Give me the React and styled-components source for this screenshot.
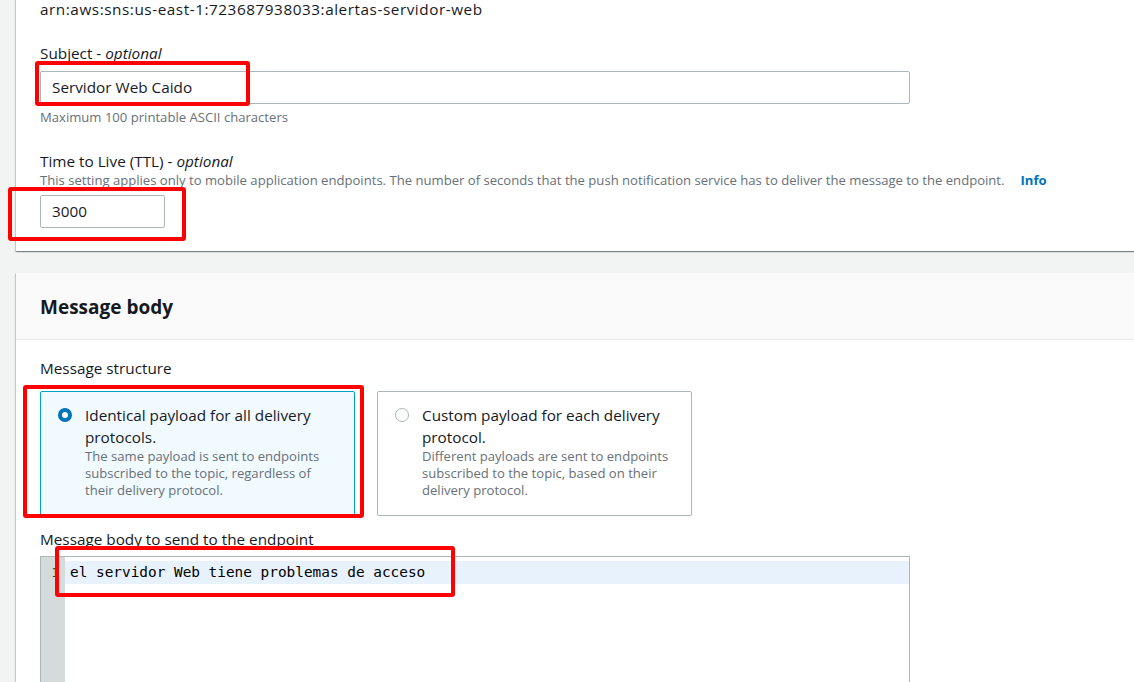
import React from "react";
import styled, { createGlobalStyle } from "styled-components";

const Global = createGlobalStyle`
  html, body { margin: 0; padding: 0; }
  body {
    background: #f2f3f3;
    font-family: "Open Sans", "Noto Sans", sans-serif;
    color: #16191f;
    overflow: hidden;
  }
`;

const Page = styled.div`
  width: 100vw;
  height: 682px;
  overflow: hidden;
  padding-left: 16px;
  box-sizing: border-box;
`;

const Card = styled.section`
  background: #fff;
  margin-right: -40px;
  margin-top: ${(p) => p.$top || 0}px;
  box-shadow: 0 1px 1px 0 rgba(0, 28, 36, 0.3), 1px 1px 1px 0 rgba(0, 28, 36, 0.15),
    -1px 1px 1px 0 rgba(0, 28, 36, 0.15);
`;

const CardBody = styled.div`
  padding: ${(p) => p.$pad || "0 24px 23px"};
  display: flex;
  flex-direction: column;
`;

const CardHeader = styled.header`
  background: #fafafa;
  border-bottom: 1px solid #eaeded;
  padding: 20px 24px 18px;
`;

const Title = styled.h2`
  margin: 0;
  font-size: 19px;
  line-height: 28px;
  font-weight: 700;
  color: #16191f;
`;

const Arn = styled.div`
  font-size: 15.3px;
  line-height: 18px;
  letter-spacing: 0.55px;
`;

const Label = styled.label`
  display: block;
  font-size: 15.3px;
  line-height: 22px;
  margin-top: ${(p) => p.$mt || 0}px;
  margin-bottom: ${(p) => p.$mb || 0}px;
  em { font-style: italic; }
`;

const Desc = styled.div`
  font-size: 13.1px;
  line-height: 16px;
  color: #687078;
  margin-top: ${(p) => p.$mt || 0}px;
  margin-bottom: ${(p) => p.$mb || 0}px;
`;

const InfoLink = styled.a`
  color: #0073bb;
  font-weight: 700;
  margin-left: 16px;
  text-decoration: none;
`;

const Field = styled.div`
  position: relative;
  width: ${(p) => p.$w}px;
`;

const Input = styled.div`
  box-sizing: border-box;
  height: 33px;
  width: 100%;
  border: 1px solid #aab7b8;
  border-radius: 2px;
  padding: 0 11px 1px;
  display: flex;
  align-items: center;
  font-size: 15.3px;
  color: #16191f;
  background: #fff;
`;

const Mark = styled.div`
  position: absolute;
  left: ${(p) => p.$l}px;
  top: ${(p) => p.$t}px;
  width: ${(p) => p.$w}px;
  height: ${(p) => p.$h}px;
  box-sizing: border-box;
  border: 4px solid #ff0000;
  border-radius: 3px;
  pointer-events: none;
`;

const Tiles = styled.div`
  display: flex;
  gap: 22px;
  margin-top: 12px;
`;

const TileWrap = styled.div`
  position: relative;
`;

const Tile = styled.div`
  box-sizing: border-box;
  width: ${(p) => p.$w}px;
  height: 125px;
  border: 1px solid ${(p) => (p.$on ? "#00a1c9" : "#aab7b8")};
  background: ${(p) => (p.$on ? "#f1faff" : "#fff")};
  border-radius: 2px;
  padding: 12px 17px 0 17px;
  display: flex;
  gap: 13px;
`;

const Radio = styled.span`
  flex: none;
  box-sizing: border-box;
  width: 14px;
  height: 14px;
  margin-top: 4px;
  border-radius: 50%;
  background: #fff;
  border: ${(p) => (p.$on ? "4px solid #0073bb" : "1.5px solid #aab7b8")};
`;

const TileText = styled.div`
  display: flex;
  flex-direction: column;
`;

const TileTitle = styled.div`
  font-size: 15.3px;
  line-height: 22px;
  color: #16191f;
`;

const TileDesc = styled.div`
  font-size: 13.1px;
  line-height: 17px;
  color: #687078;
`;

const EditorWrap = styled.div`
  position: relative;
  width: 870px;
`;

const Editor = styled.div`
  box-sizing: border-box;
  height: 200px;
  border: 1px solid #aab7b8;
  display: flex;
  background: #fff;
`;

const Gutter = styled.div`
  width: 24px;
  flex: none;
  background: #d5dbdb;
  padding-top: 4px;
  box-sizing: border-box;
`;

const LineNo = styled.div`
  height: 23px;
  line-height: 23px;
  text-align: right;
  padding-right: 6px;
  font-family: "DejaVu Sans Mono", monospace;
  font-size: 13px;
  color: #333;
`;

const Code = styled.div`
  flex: 1;
  padding-top: 4px;
`;

const CodeLine = styled.div`
  height: 23px;
  line-height: 23px;
  padding-left: 5px;
  background: ${(p) => (p.$active ? "#e8f2fd" : "transparent")};
  font-family: "DejaVu Sans Mono", monospace;
  font-size: 14.4px;
  color: #000;
  white-space: pre;
`;

export default function App() {
  return (
    <Page>
      <Global />
      <Card $top={-10}>
        <CardBody $pad="10px 24px 23px">
          <Arn>arn:aws:sns:us-east-1:723687938033:alertas-servidor-web</Arn>
          <Label $mt={24} $mb={7}>
            Subject - <em>optional</em>
          </Label>
          <Field $w={870}>
            <Input>Servidor Web Caido</Input>
            <Mark $l={-5} $t={-10} $w={215} $h={45} />
          </Field>
          <Desc $mt={5}>Maximum 100 printable ASCII characters</Desc>
          <Label $mt={25}>
            Time to Live (TTL) - <em>optional</em>
          </Label>
          <Desc $mb={7}>
            This setting applies only to mobile application endpoints. The number of seconds that the push
            notification service has to deliver the message to the endpoint.
            <InfoLink>Info</InfoLink>
          </Desc>
          <Field $w={125}>
            <Input>3000</Input>
            <Mark $l={-32} $t={-8} $w={178} $h={54} />
          </Field>
        </CardBody>
      </Card>

      <Card $top={22}>
        <CardHeader>
          <Title>Message body</Title>
        </CardHeader>
        <CardBody $pad="17px 24px 0">
          <Label>Message structure</Label>
          <Tiles>
            <TileWrap>
              <Tile $on $w={315}>
                <Radio $on />
                <TileText>
                  <TileTitle>Identical payload for all delivery protocols.</TileTitle>
                  <TileDesc>
                    The same payload is sent to endpoints subscribed to the topic, regardless of their delivery
                    protocol.
                  </TileDesc>
                </TileText>
              </Tile>
              <Mark $l={-17} $t={-6} $w={341} $h={133} />
            </TileWrap>
            <Tile $w={315}>
              <Radio />
              <TileText>
                <TileTitle>Custom payload for each delivery protocol.</TileTitle>
                <TileDesc>
                  Different payloads are sent to endpoints subscribed to the topic, based on their delivery
                  protocol.
                </TileDesc>
              </TileText>
            </Tile>
          </Tiles>
          <Label $mt={12} $mb={6}>
            Message body to send to the endpoint
          </Label>
          <EditorWrap>
            <Editor>
              <Gutter>
                <LineNo>1</LineNo>
              </Gutter>
              <Code>
                <CodeLine $active>el servidor Web tiene problemas de acceso</CodeLine>
              </Code>
            </Editor>
            <Mark $l={15} $t={-10} $w={400} $h={51} />
          </EditorWrap>
        </CardBody>
      </Card>
    </Page>
  );
}
